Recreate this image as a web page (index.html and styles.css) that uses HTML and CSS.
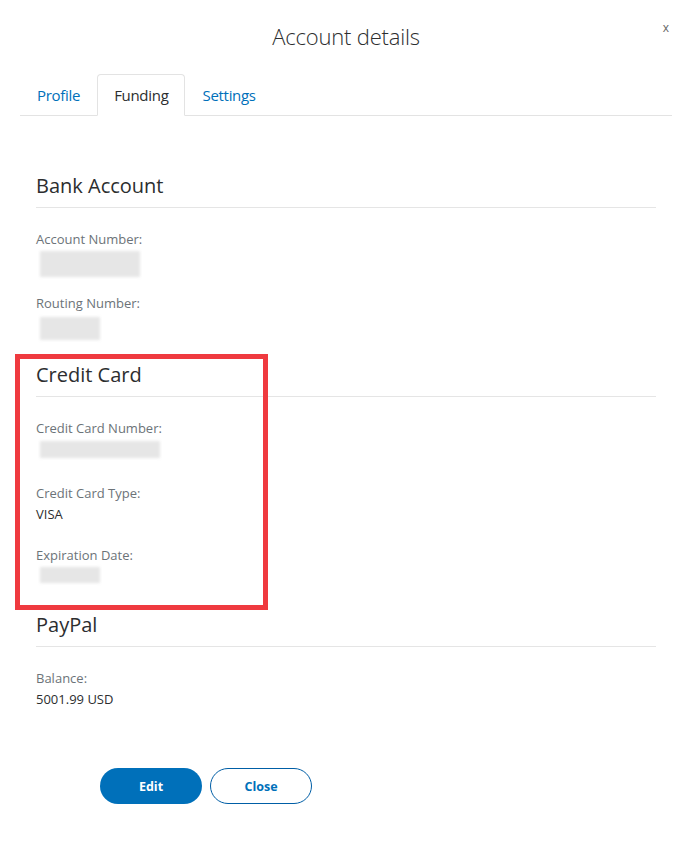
FILE: index.html
```html
<!DOCTYPE html>
<html lang="en">
<head>
    <meta charset="UTF-8">
    <meta name="viewport" content="width=device-width, initial-scale=1.0">
    <title>Account details</title>
    <link rel="stylesheet" href="styles.css">
</head>
<body>
    <div class="modal">
        <button class="close" type="button">x</button>
        <h1 class="title">Account details</h1>

        <div class="tabs">
            <a class="tab" href="#">Profile</a>
            <a class="tab active" href="#">Funding</a>
            <a class="tab" href="#">Settings</a>
        </div>

        <div class="content">
            <section class="group first">
                <h2>Bank Account</h2>
                <div class="field">
                    <div class="label">Account Number:</div>
                    <div class="value"><span class="redacted acct"></span></div>
                </div>
                <div class="field">
                    <div class="label">Routing Number:</div>
                    <div class="value"><span class="redacted routing"></span></div>
                </div>
            </section>

            <section class="group highlight">
                <h2>Credit Card</h2>
                <div class="field">
                    <div class="label">Credit Card Number:</div>
                    <div class="value"><span class="redacted card"></span></div>
                </div>
                <div class="field">
                    <div class="label">Credit Card Type:</div>
                    <div class="value">VISA</div>
                </div>
                <div class="field">
                    <div class="label">Expiration Date:</div>
                    <div class="value"><span class="redacted expiry"></span></div>
                </div>
            </section>

            <section class="group">
                <h2>PayPal</h2>
                <div class="field">
                    <div class="label">Balance:</div>
                    <div class="value">5001.99 USD</div>
                </div>
            </section>
        </div>

        <div class="actions">
            <button class="btn primary" type="button">Edit</button>
            <button class="btn secondary" type="button">Close</button>
        </div>
    </div>
</body>
</html>
```

FILE: styles.css
```css
body {
    margin: 0;
    padding: 0;
    background: #fff;
    font-family: "Open Sans", Arial, sans-serif;
    color: #2c2e2f;
}
.modal {
    position: relative;
    width: 652px;
    padding: 0 15px 40px 20px;
}
.close {
    position: absolute;
    top: 19px;
    right: 18px;
    border: none;
    background: none;
    color: #666;
    font-family: inherit;
    font-size: 12px;
    padding: 0;
    cursor: pointer;
}
.title {
    margin: 0;
    padding-top: 20px;
    font-size: 22px;
    font-weight: 300;
    line-height: 32px;
    text-align: center;
    color: #2c2e2f;
    letter-spacing: -0.2px;
}
.tabs {
    display: flex;
    margin-top: 22px;
    border-bottom: 1px solid #e3e3e3;
}
.tab {
    display: block;
    padding: 1px 16px 0;
    line-height: 39px;
    font-size: 15px;
    letter-spacing: -0.3px;
    color: #0070ba;
    text-decoration: none;
    border: 1px solid transparent;
    border-radius: 4px 4px 0 0;
    margin-bottom: -1px;
}
.tab.active {
    color: #2c2e2f;
    border-color: #e3e3e3;
    border-bottom-color: #fff;
}
.content {
    padding: 0 16px;
}
.group {
    position: relative;
    padding-top: 2px;
}
.group.first {
    margin-top: 54px;
}
.group h2 {
    margin: 0 0 21px;
    padding-bottom: 7px;
    border-bottom: 1px solid #e5e5e5;
    font-size: 20px;
    font-weight: 400;
    line-height: 28px;
}
.field {
    margin-bottom: 20px;
}
.label {
    font-size: 13px;
    line-height: 20px;
    color: #6c7378;
}
.value {
    height: 22px;
    font-size: 13px;
    line-height: 22px;
}
.redacted {
    display: block;
    margin-left: 4px;
    background: #e6e6e6;
    filter: blur(1.5px);
}
.redacted.acct {
    width: 100px;
    height: 26px;
    margin-top: 2px;
}
.redacted.routing {
    width: 60px;
    height: 23px;
    margin-top: 4px;
}
.redacted.card {
    width: 120px;
    height: 17px;
    margin-top: 3px;
}
.redacted.expiry {
    width: 60px;
    height: 16px;
    margin-top: 2px;
}
.highlight::before {
    content: "";
    position: absolute;
    left: -21px;
    top: -5px;
    width: 243px;
    height: 246px;
    border: 5px solid #ef3a3f;
}
.actions {
    display: flex;
    gap: 8px;
    margin-top: 58px;
    padding-left: 80px;
}
.btn {
    width: 102px;
    height: 36px;
    border-radius: 18px;
    font-family: inherit;
    font-size: 12.5px;
    font-weight: bold;
    cursor: pointer;
}
.btn.primary {
    background: #0070ba;
    border: none;
    color: #fff;
}
.btn.secondary {
    background: #fff;
    border: 1px solid #005ea6;
    color: #0070ba;
}
```
